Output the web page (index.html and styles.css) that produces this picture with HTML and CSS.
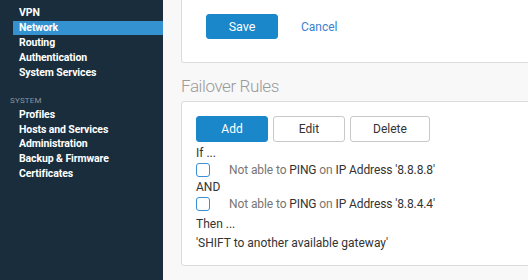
FILE: index.html
```html
<!DOCTYPE html>
<html>
<head>
<meta charset="utf-8">
<link rel="stylesheet" href="styles.css">
</head>
<body>
<div class="app">
  <nav class="sidebar">
    <div class="group group-first">
      <div class="group-label">CONFIGURE</div>
      <ul class="menu">
        <li class="item">VPN</li>
        <li class="item active">Network</li>
        <li class="item">Routing</li>
        <li class="item">Authentication</li>
        <li class="item">System Services</li>
      </ul>
    </div>
    <div class="group group-system">
      <div class="group-label">SYSTEM</div>
      <ul class="menu">
        <li class="item">Profiles</li>
        <li class="item">Hosts and Services</li>
        <li class="item">Administration</li>
        <li class="item">Backup &amp; Firmware</li>
        <li class="item">Certificates</li>
      </ul>
    </div>
  </nav>
  <main class="main">
    <section class="card card-top">
      <div class="actions">
        <button class="btn btn-primary btn-save">Save</button>
        <a class="link-cancel">Cancel</a>
      </div>
    </section>
    <h2 class="section-title">Failover Rules</h2>
    <section class="card card-rules">
      <div class="toolbar">
        <button class="btn btn-primary btn-tool">Add</button>
        <button class="btn btn-default btn-tool">Edit</button>
        <button class="btn btn-default btn-delete">Delete</button>
      </div>
      <div class="line line-if">If ...</div>
      <div class="cond cond-1">
        <span class="checkbox"></span>
        <span class="cond-text"><span class="muted">Not able to </span>PING<span class="muted"> on </span>IP Address '8.8.8.8'</span>
      </div>
      <div class="line line-and">AND</div>
      <div class="cond cond-2">
        <span class="checkbox"></span>
        <span class="cond-text"><span class="muted">Not able to </span>PING<span class="muted"> on </span>IP Address '8.8.4.4'</span>
      </div>
      <div class="line line-then">Then ...</div>
      <div class="line line-action">'SHIFT to another available gateway'</div>
    </section>
  </main>
</div>
</body>
</html>
```

FILE: styles.css
```css
* { box-sizing: border-box; }
html, body {
  margin: 0;
  padding: 0;
  height: 100%;
  overflow: hidden;
}
body {
  font-family: Roboto, "Liberation Sans", sans-serif;
  background: #f8f8f8;
  color: #333;
}
.app {
  display: flex;
  height: 280px;
}
.sidebar {
  width: 163px;
  flex: none;
  background: #192d3c;
  color: #fff;
}
.group-first {
  margin-top: -10px;
}
.group-label {
  height: 15px;
  line-height: 15px;
  padding-left: 10px;
  font-size: 8px;
  color: #8795a0;
  letter-spacing: 0.2px;
}
.menu {
  list-style: none;
  margin: 0;
  padding: 0;
}
.item {
  height: 15px;
  line-height: 15px;
  margin-left: 13px;
  padding-left: 6px;
  font-size: 10.5px;
  font-weight: 700;
  letter-spacing: -0.1px;
  color: #fff;
  white-space: nowrap;
}
.item.active {
  background: #3592d0;
  height: 14px;
  line-height: 14px;
  margin-top: 0.5px;
  margin-bottom: 0.5px;
}
.group-system {
  margin-top: 13px;
}
.group-system .item {
  height: 14.7px;
  line-height: 14.7px;
}
.main {
  flex: 1;
  min-width: 0;
  padding-left: 18px;
  margin-right: -30px;
}
.card {
  background: #fff;
  border: 1px solid #dcdcdc;
  border-radius: 3px;
}
.card-top {
  border-top: 0;
  border-top-left-radius: 0;
  border-top-right-radius: 0;
  padding: 14px 24px 23px;
}
.actions {
  display: flex;
  align-items: center;
  height: 25px;
}
.btn {
  font-family: Roboto, "Liberation Sans", sans-serif;
  font-size: 12px;
  border-radius: 3px;
  padding: 0;
  cursor: pointer;
}
.btn-primary {
  background: #1a87cb;
  border: 1px solid #1a87cb;
  color: #fff;
}
.btn-default {
  background: #fff;
  border: 1px solid #c9c9c9;
  color: #333;
}
.btn-save {
  width: 72px;
  height: 25px;
  font-size: 12.5px;
}
.link-cancel {
  margin-left: 23px;
  font-size: 12px;
  color: #3a7fd0;
}
.section-title {
  margin: 0;
  padding-top: 11px;
  padding-bottom: 2px;
  line-height: 25px;
  font-size: 17px;
  font-weight: 300;
  letter-spacing: -0.4px;
  color: #9a9a9a;
}
.card-rules {
  padding: 14px 14px 15px;
  font-size: 12px;
}
.toolbar {
  display: flex;
  gap: 5px;
  height: 26px;
  margin-bottom: 3px;
}
.btn-tool {
  width: 72px;
  height: 26px;
}
.btn-delete {
  width: 80px;
  height: 26px;
}
.line {
  display: flex;
  align-items: center;
  color: #333;
}
.line-if { height: 16px; }
.line-and { height: 16px; }
.line-then { height: 24px; }
.line-action { height: 14px; }
.cond {
  display: flex;
  align-items: center;
  color: #333;
}
.cond-1 { height: 18px; }
.cond-2 { height: 17px; }
.checkbox {
  width: 14px;
  height: 14px;
  border: 1.5px solid #3a8fd5;
  border-radius: 3px;
  background: #fff;
  flex: none;
}
.cond-text {
  margin-left: 19px;
  letter-spacing: -0.1px;
}
.muted {
  color: #7a7572;
}
```
